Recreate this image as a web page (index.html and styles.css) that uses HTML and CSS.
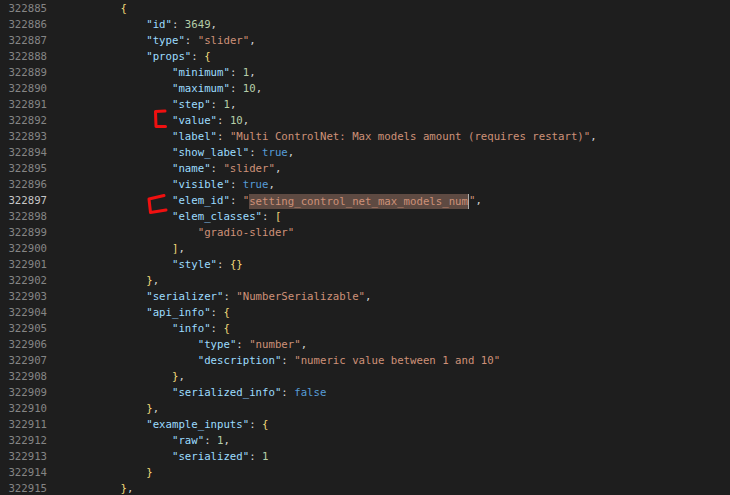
FILE: index.html
```html
<!DOCTYPE html>
<html>
<head>
<meta charset="utf-8">
<link rel="stylesheet" href="styles.css">
</head>
<body>
<div class="editor">
  <div class="row"><span class="num">322885</span><span class="code">        <span class="b">{</span></span></div>
  <div class="row"><span class="num">322886</span><span class="code">            <span class="k">"id"</span>: <span class="n">3649</span>,</span></div>
  <div class="row"><span class="num">322887</span><span class="code">            <span class="k">"type"</span>: <span class="s">"slider"</span>,</span></div>
  <div class="row"><span class="num">322888</span><span class="code">            <span class="k">"props"</span>: <span class="b">{</span></span></div>
  <div class="row"><span class="num">322889</span><span class="code">                <span class="k">"minimum"</span>: <span class="n">1</span>,</span></div>
  <div class="row"><span class="num">322890</span><span class="code">                <span class="k">"maximum"</span>: <span class="n">10</span>,</span></div>
  <div class="row"><span class="num">322891</span><span class="code">                <span class="k">"step"</span>: <span class="n">1</span>,</span></div>
  <div class="row"><span class="num">322892</span><span class="code">                <span class="k">"value"</span>: <span class="n">10</span>,</span></div>
  <div class="row"><span class="num">322893</span><span class="code">                <span class="k">"label"</span>: <span class="s">"Multi ControlNet: Max models amount (requires restart)"</span>,</span></div>
  <div class="row"><span class="num">322894</span><span class="code">                <span class="k">"show_label"</span>: <span class="c">true</span>,</span></div>
  <div class="row"><span class="num">322895</span><span class="code">                <span class="k">"name"</span>: <span class="s">"slider"</span>,</span></div>
  <div class="row"><span class="num">322896</span><span class="code">                <span class="k">"visible"</span>: <span class="c">true</span>,</span></div>
  <div class="row"><span class="num current">322897</span><span class="code">                <span class="k">"elem_id"</span>: <span class="s">"<span class="hl">setting_control_net_max_models_num</span><span class="cursor"></span>"</span>,</span></div>
  <div class="row"><span class="num">322898</span><span class="code">                <span class="k">"elem_classes"</span>: <span class="b">[</span></span></div>
  <div class="row"><span class="num">322899</span><span class="code">                    <span class="s">"gradio-slider"</span></span></div>
  <div class="row"><span class="num">322900</span><span class="code">                <span class="b">]</span>,</span></div>
  <div class="row"><span class="num">322901</span><span class="code">                <span class="k">"style"</span>: <span class="b">{}</span></span></div>
  <div class="row"><span class="num">322902</span><span class="code">            <span class="b">}</span>,</span></div>
  <div class="row"><span class="num">322903</span><span class="code">            <span class="k">"serializer"</span>: <span class="s">"NumberSerializable"</span>,</span></div>
  <div class="row"><span class="num">322904</span><span class="code">            <span class="k">"api_info"</span>: <span class="b">{</span></span></div>
  <div class="row"><span class="num">322905</span><span class="code">                <span class="k">"info"</span>: <span class="b">{</span></span></div>
  <div class="row"><span class="num">322906</span><span class="code">                    <span class="k">"type"</span>: <span class="s">"number"</span>,</span></div>
  <div class="row"><span class="num">322907</span><span class="code">                    <span class="k">"description"</span>: <span class="s">"numeric value between 1 and 10"</span></span></div>
  <div class="row"><span class="num">322908</span><span class="code">                <span class="b">}</span>,</span></div>
  <div class="row"><span class="num">322909</span><span class="code">                <span class="k">"serialized_info"</span>: <span class="c">false</span></span></div>
  <div class="row"><span class="num">322910</span><span class="code">            <span class="b">}</span>,</span></div>
  <div class="row"><span class="num">322911</span><span class="code">            <span class="k">"example_inputs"</span>: <span class="b">{</span></span></div>
  <div class="row"><span class="num">322912</span><span class="code">                <span class="k">"raw"</span>: <span class="n">1</span>,</span></div>
  <div class="row"><span class="num">322913</span><span class="code">                <span class="k">"serialized"</span>: <span class="n">1</span></span></div>
  <div class="row"><span class="num">322914</span><span class="code">            <span class="b">}</span></span></div>
  <div class="row"><span class="num">322915</span><span class="code">        <span class="b">}</span>,</span></div>
  <svg class="marks" width="730" height="495" viewBox="0 0 730 495">
    <path d="M165,111 L155.5,111.5 L156,126.5 L165.5,126.5" />
    <path d="M164,195.5 L149,199 L150.5,212.5 L166,210" />
  </svg>
</div>
</body>
</html>
```

FILE: styles.css
```css
html, body {
  margin: 0;
  padding: 0;
  background: #1e1e1e;
}
.editor {
  position: relative;
  width: 730px;
  height: 495px;
  overflow: hidden;
  padding-top: 1px;
  box-sizing: border-box;
  font-family: "DejaVu Sans Mono", monospace;
  font-size: 10.7px;
  color: #d4d4d4;
}
.row {
  display: flex;
  height: 16px;
  line-height: 16px;
  white-space: pre;
}
.num {
  width: 47px;
  text-align: right;
  color: #858585;
  flex: none;
}
.num.current {
  color: #c6c6c6;
}
.code {
  padding-left: 22px;
}
.k { color: #9cdcfe; }
.s { color: #ce9178; }
.n { color: #b5cea8; }
.c { color: #569cd6; }
.b { color: #f1da7a; }
.hl {
  background: #5e4a42;
  display: inline-block;
  height: 15px;
  line-height: 16px;
  vertical-align: top;
  margin-top: 0.5px;
}
.cursor {
  display: inline-block;
  width: 0;
  height: 15px;
  border-left: 1.5px solid #aeafad;
  vertical-align: top;
  margin-top: 0.5px;
}
.marks {
  position: absolute;
  left: 0;
  top: 0;
  pointer-events: none;
}
.marks path {
  fill: none;
  stroke: #f01010;
  stroke-width: 3;
  stroke-linecap: round;
  stroke-linejoin: round;
}
```
